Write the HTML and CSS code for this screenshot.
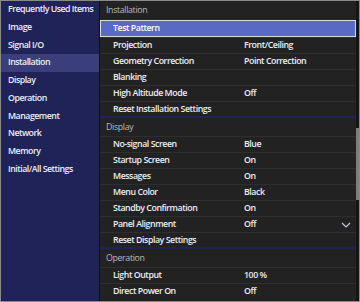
FILE: index.html
```html
<!DOCTYPE html>
<html>
<head>
<meta charset="utf-8">
<link rel="stylesheet" href="styles.css">
</head>
<body>
<div class="frame">
  <nav class="nav">
    <div class="nav-item">Frequently Used Items</div>
    <div class="nav-item">Image</div>
    <div class="nav-item">Signal I/O</div>
    <div class="nav-item active">Installation</div>
    <div class="nav-item">Display</div>
    <div class="nav-item">Operation</div>
    <div class="nav-item">Management</div>
    <div class="nav-item">Network</div>
    <div class="nav-item">Memory</div>
    <div class="nav-item">Initial/All Settings</div>
  </nav>
  <main class="panel">
    <div class="head first">Installation</div>
    <div class="row selected"><span class="label">Test Pattern</span></div>
    <div class="row"><span class="label">Projection</span><span class="value">Front/Ceiling</span></div>
    <div class="row"><span class="label">Geometry Correction</span><span class="value">Point Correction</span></div>
    <div class="row"><span class="label">Blanking</span></div>
    <div class="row"><span class="label">High Altitude Mode</span><span class="value">Off</span></div>
    <div class="row last"><span class="label">Reset Installation Settings</span></div>
    <div class="head">Display</div>
    <div class="row"><span class="label">No-signal Screen</span><span class="value">Blue</span></div>
    <div class="row"><span class="label">Startup Screen</span><span class="value">On</span></div>
    <div class="row"><span class="label">Messages</span><span class="value">On</span></div>
    <div class="row"><span class="label">Menu Color</span><span class="value">Black</span></div>
    <div class="row"><span class="label">Standby Confirmation</span><span class="value">On</span></div>
    <div class="row"><span class="label">Panel Alignment</span><span class="value">Off</span>
      <svg class="chev" width="10" height="6" viewBox="0 0 10 6"><path d="M1 1 L5 5 L9 1" fill="none" stroke="#c8c8d8" stroke-width="1.2"/></svg>
    </div>
    <div class="row last"><span class="label">Reset Display Settings</span></div>
    <div class="head">Operation</div>
    <div class="row"><span class="label">Light Output</span><span class="value">100 %</span></div>
    <div class="row"><span class="label">Direct Power On</span><span class="value">Off</span></div>
    <div class="scroll"><div class="thumb"></div></div>
  </main>
</div>
</body>
</html>
```
FILE: styles.css
```css
* { box-sizing: border-box; }
html, body { margin: 0; padding: 0; }
body {
  width: 360px;
  height: 302px;
  background: #222;
  font-family: "Open Sans", "Noto Sans", sans-serif;
  font-size: 8.8px;
  color: #eceef6;
  overflow: hidden;
}
.frame {
  width: 360px;
  height: 302px;
  border: 1px solid #8a8a8a;
  display: flex;
  background: #111;
}
.nav {
  width: 98px;
  background: #1f2358;
  display: flex;
  flex-direction: column;
}
.nav-item {
  height: 17.75px;
  line-height: 17.75px;
  padding-left: 7px;
  white-space: nowrap;
  font-weight: 600;
  letter-spacing: -0.5px;
}
.nav-item.active { background: #3a3f7c; }
.panel {
  margin-left: 1px;
  flex: 1;
  background: #222;
  position: relative;
  display: flex;
  flex-direction: column;
}
.head {
  height: 18px;
  line-height: 18px;
  padding-left: 6px;
  color: #b9b9bf;
  font-weight: 400;
  letter-spacing: -0.35px;
}
.head.first { height: 19px; line-height: 19px; }
.row {
  height: 16px;
  line-height: 15px;
  border-top: 1px solid #2e2e2e;
  display: flex;
  align-items: center;
  position: relative;
  font-weight: 600;
  letter-spacing: -0.45px;
}
.row .label { width: 144px; padding-left: 13px; white-space: nowrap; }
.row .value { white-space: nowrap; }
.row.selected {
  height: 17px;
  border: 1px solid #d8dae6;
  background: #5a69c4;
  margin-right: 3px;
  color: #fff;
}
.row.selected .label { padding-left: 12px; }
.row.last {
  height: 17px;
  border-bottom: 2px solid #1f2358;
}
.chev { position: absolute; left: 241px; top: 5px; }
.scroll {
  position: absolute;
  right: 0;
  top: 0;
  width: 3px;
  height: 100%;
  background: #151515;
}
.thumb {
  position: absolute;
  top: 127px;
  left: 0;
  width: 3px;
  height: 72px;
  background: #7e7e7e;
}
```
